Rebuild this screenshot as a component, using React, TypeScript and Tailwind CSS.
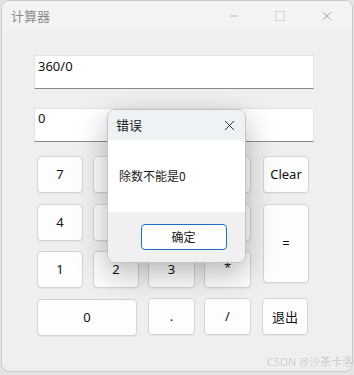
import { X, Minus } from "lucide-react"

const btn =
  "flex items-center justify-center rounded-[4px] border border-[#d3d3d3] bg-[#fdfdfd] text-[13px] text-[#111] shadow-[0_1px_0_rgba(0,0,0,0.04)]"

export default function App() {
  return (
    <div className="relative h-[375px] w-[354px] overflow-hidden bg-[#e4e4e4] font-['Noto_Sans','Noto_Sans_CJK_SC',sans-serif]">
      <div className="ml-[1px] flex h-[372px] w-[352px] flex-col overflow-hidden rounded-[8px] border border-[#c9c9c9] bg-[#efefef]">
        {/* title bar */}
        <div className="flex h-[30px] shrink-0 items-center bg-[#f3f3f3] pl-[9px]">
          <span className="text-[13px] text-[#8c8c8c] font-['Noto_Sans_CJK_SC',sans-serif]">计算器</span>
          <div className="ml-auto flex items-center">
            <Minus className="mr-[35px] h-[12px] w-[12px] text-[#8a8a8a]" strokeWidth={1.2} />
            <div className="mr-[35px] h-[10px] w-[10px] border border-[#d6d6d6]" />
            <X className="mr-[18px] h-[14px] w-[14px] text-[#8a8a8a]" strokeWidth={1.2} />
          </div>
        </div>

        {/* content */}
        <div className="flex flex-col pl-[32px] pt-[24px]">
          <div className="h-[34px] w-[280px] border border-b-[#8a8a8a] border-[#e3e3e3] bg-white pl-[3px] pt-[2px] text-[13px] leading-[16px] text-[#111]">
            360/0
          </div>
          <div className="mt-[19px] h-[34px] w-[280px] border border-b-[#8a8a8a] border-[#e3e3e3] bg-white pl-[3px] pt-[1px] text-[13px] leading-[16px] text-[#111]">
            0
          </div>

          <div className="ml-[3px] mt-[14px] grid grid-cols-[56px_55px_56px_59px_46px] grid-rows-[48px_47px_47px_37px]">
            <div className={`${btn} h-[37px] w-[46px]`}>7</div>
            <div className={`${btn} h-[37px] w-[46px]`}>8</div>
            <div className={`${btn} h-[37px] w-[47px]`}>9</div>
            <div className={`${btn} h-[37px] w-[47px]`}>+</div>
            <div className={`${btn} h-[37px] w-[46px]`}>Clear</div>

            <div className={`${btn} h-[37px] w-[46px]`}>4</div>
            <div className={`${btn} h-[37px] w-[46px]`}>5</div>
            <div className={`${btn} h-[37px] w-[47px]`}>6</div>
            <div className={`${btn} h-[37px] w-[47px]`}>-</div>
            <div className={`${btn} row-span-2 h-[79px] w-[46px]`}>=</div>

            <div className={`${btn} h-[37px] w-[46px]`}>1</div>
            <div className={`${btn} h-[37px] w-[46px]`}>2</div>
            <div className={`${btn} h-[37px] w-[47px]`}>3</div>
            <div className={`${btn} h-[37px] w-[47px] items-start pt-[6px]`}>*</div>

            <div className={`${btn} col-span-2 mt-[1px] h-[37px] w-[100px]`}>0</div>
            <div className={`${btn} h-[37px] w-[47px]`}>.</div>
            <div className={`${btn} h-[37px] w-[47px]`}>/</div>
            <div className={`${btn} -ml-[1px] h-[37px] w-[46px] font-['Noto_Sans_CJK_SC',sans-serif]`}>退出</div>
          </div>
        </div>
      </div>

      {/* error dialog */}
      <div className="absolute left-[107px] top-[109px] flex h-[154px] w-[139px] flex-col overflow-hidden rounded-[8px] border border-[#c4c4c4] bg-white shadow-[0_10px_30px_rgba(0,0,0,0.28)] font-['Noto_Sans_CJK_SC',sans-serif]">
        <div className="flex h-[30px] shrink-0 items-center justify-between bg-[#edf3f5] pl-[8px] pr-[7px]">
          <span className="text-[13px] text-[#1a1a1a]">错误</span>
          <X className="h-[17px] w-[17px] text-[#222]" strokeWidth={1.3} />
        </div>
        <div className="flex h-[72px] shrink-0 items-center pl-[11px] text-[12px] text-[#1a1a1a]">
          除数不能是0
        </div>
        <div className="flex flex-1 items-start justify-center bg-[#f0f0f0] pt-[12px]">
          <div className="ml-[14px] flex h-[26px] w-[86px] items-center justify-center rounded-[4px] border border-[#1a6fc2] bg-[#fdfdfd] text-[12px] text-[#1a1a1a]">
            确定
          </div>
        </div>
      </div>

      {/* watermark */}
      <div className="absolute right-[1px] top-[354px] text-[11px] text-[#c9c9c9] [text-shadow:0_0_2px_#fff] font-['Noto_Sans','Noto_Sans_CJK_SC',sans-serif]">
        CSDN @沙茶卡洛
      </div>
    </div>
  )
}
